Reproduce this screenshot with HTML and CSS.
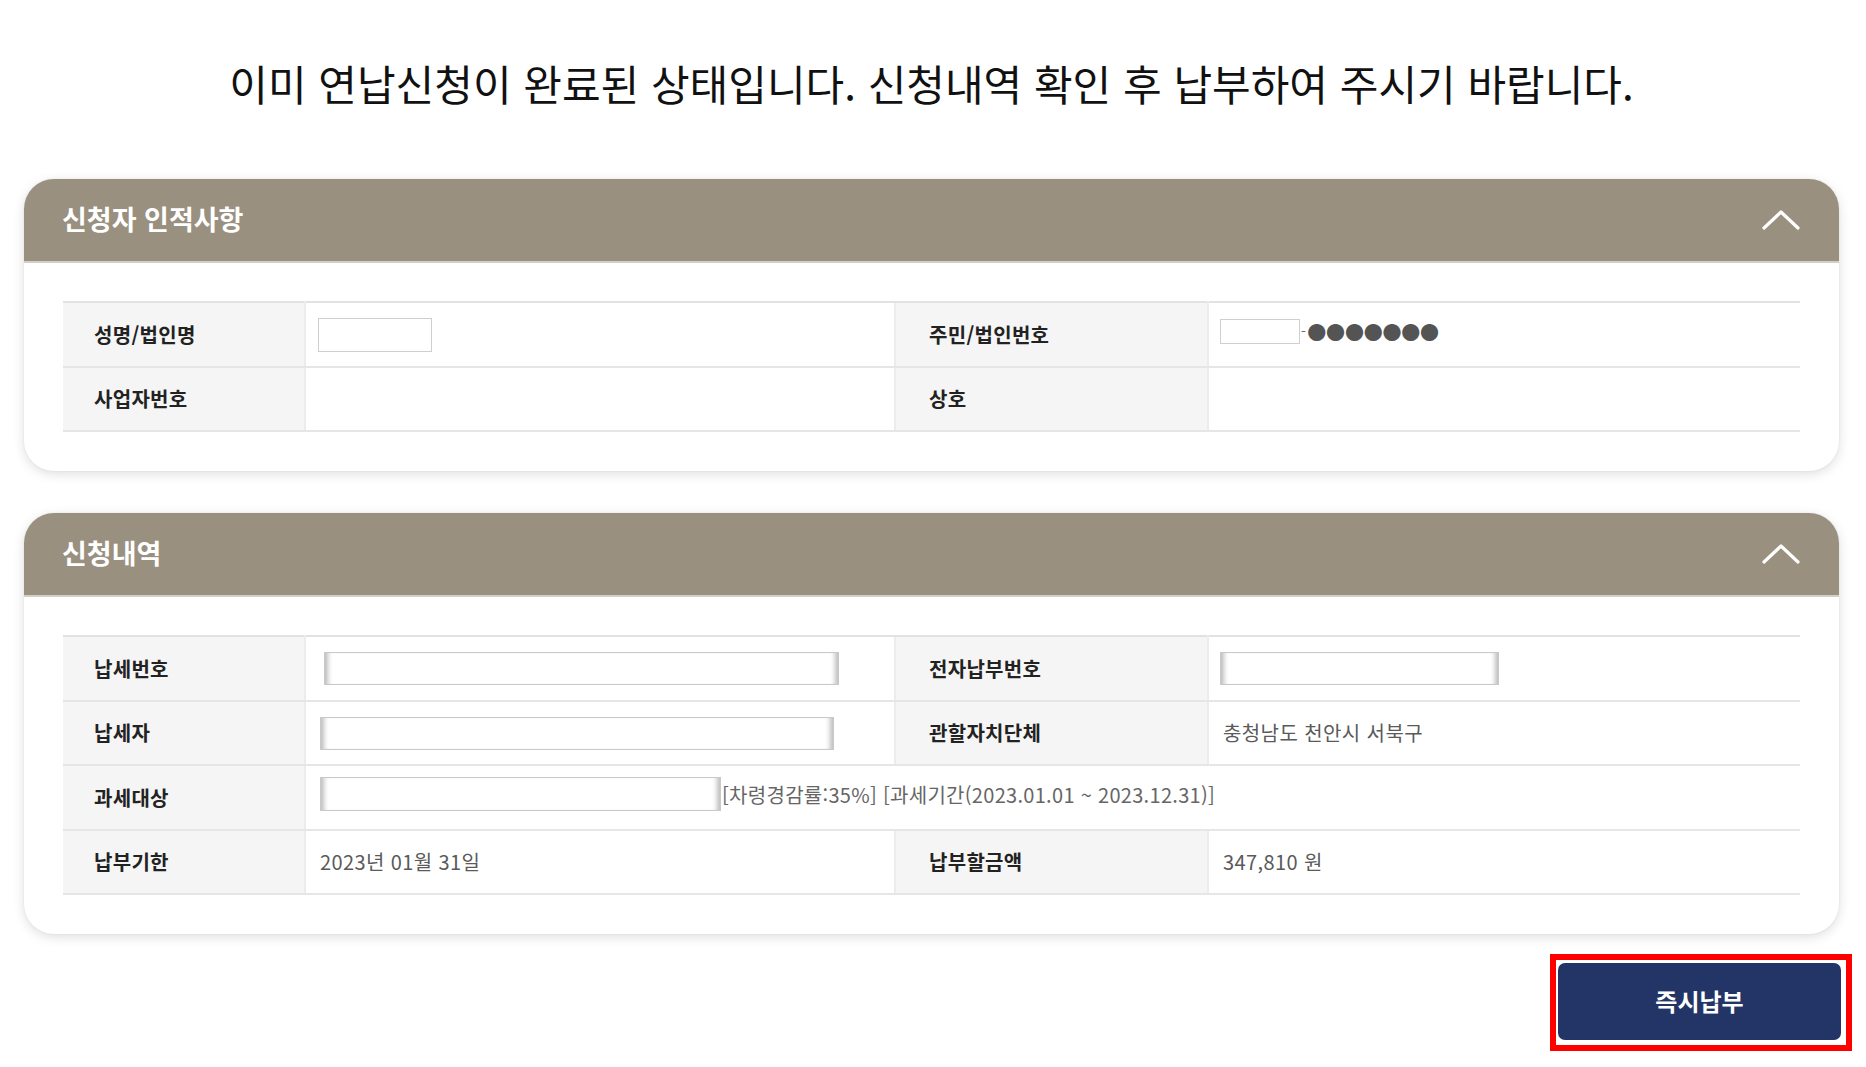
FILE: index.html
```html
<!DOCTYPE html>
<html lang="ko">
<head>
<meta charset="utf-8">
<title>연납신청 확인</title>
<link rel="stylesheet" href="styles.css">
</head>
<body>
<div class="page">
  <h1 class="notice">이미 연납신청이 완료된 상태입니다. 신청내역 확인 후 납부하여 주시기 바랍니다.</h1>

  <section class="card">
    <div class="card-head">
      <h2 class="card-title">신청자 인적사항</h2>
      <svg class="chevron" width="38" height="22" viewBox="0 0 38 22"><polyline points="2,19 19,3 36,19" fill="none" stroke="#fff" stroke-width="3.2" stroke-linecap="round" stroke-linejoin="round"/></svg>
    </div>
    <div class="card-body">
      <table class="info">
        <colgroup><col class="c1"><col class="c2"><col class="c3"><col class="c4"></colgroup>
        <tr>
          <th>성명/법인명</th>
          <td><span class="box box-name"></span></td>
          <th>주민/법인번호</th>
          <td><span class="rrn"><span class="box box-rrn"></span><span class="dash">-</span><span class="dots">●●●●●●●</span></span></td>
        </tr>
        <tr>
          <th>사업자번호</th>
          <td></td>
          <th>상호</th>
          <td></td>
        </tr>
      </table>
    </div>
  </section>

  <section class="card card-second">
    <div class="card-head">
      <h2 class="card-title">신청내역</h2>
      <svg class="chevron" width="38" height="22" viewBox="0 0 38 22"><polyline points="2,19 19,3 36,19" fill="none" stroke="#fff" stroke-width="3.2" stroke-linecap="round" stroke-linejoin="round"/></svg>
    </div>
    <div class="card-body">
      <table class="info">
        <colgroup><col class="c1"><col class="c2"><col class="c3"><col class="c4"></colgroup>
        <tr>
          <th>납세번호</th>
          <td><span class="box mask mask-taxno"></span></td>
          <th>전자납부번호</th>
          <td><span class="box mask mask-epay"></span></td>
        </tr>
        <tr>
          <th>납세자</th>
          <td><span class="box mask mask-payer"></span></td>
          <th>관할자치단체</th>
          <td>충청남도 천안시 서북구</td>
        </tr>
        <tr>
          <th>과세대상</th>
          <td colspan="3"><span class="target"><span class="box mask mask-target"></span><span class="target-text">[차령경감률:35%] [과세기간(2023.01.01 ~ 2023.12.31)]</span></span></td>
        </tr>
        <tr>
          <th>납부기한</th>
          <td>2023년 01월 31일</td>
          <th>납부할금액</th>
          <td>347,810 원</td>
        </tr>
      </table>
    </div>
  </section>

  <div class="actions">
    <div class="highlight">
      <button class="pay-btn" type="button">즉시납부</button>
    </div>
  </div>
</div>
</body>
</html>
```

FILE: styles.css
```css
* { box-sizing: border-box; }

html, body {
  margin: 0;
  padding: 0;
  background: #fff;
}

body {
  font-family: "Noto Sans CJK KR", "Noto Sans", sans-serif;
  color: #222;
}

.page {
  width: 1815px;
  margin-left: 24px;
  padding-top: 58px;
}

.notice {
  margin: 0;
  font-size: 42px;
  line-height: 50px;
  font-weight: 400;
  color: #111;
  text-align: center;
  letter-spacing: 0;
}

.card {
  margin-top: 71px;
  background: #fff;
  border-radius: 30px;
  overflow: hidden;
  box-shadow: 0 3px 12px rgba(0, 0, 0, 0.13), 0 0 2px rgba(0, 0, 0, 0.08);
}

.card-second {
  margin-top: 42px;
}

.card-head {
  height: 84px;
  background: #9a907f;
  border-bottom: 2px solid #d3cec6;
  display: flex;
  align-items: center;
  justify-content: space-between;
  padding: 0 39px 0 38px;
}

.card-title {
  margin: 0 0 3px;
  font-size: 27px;
  font-weight: 700;
  color: #fff;
  letter-spacing: 0;
}

.chevron {
  display: block;
  margin-top: 0;
}

.card-body {
  padding: 38px 39px 39px;
}

.info {
  width: 100%;
  border-collapse: collapse;
  table-layout: fixed;
}

.info .c1 { width: 242px; }
.info .c2 { width: 590px; }
.info .c3 { width: 313px; }
.info .c4 { width: auto; }

.info tr:first-child th,
.info tr:first-child td {
  border-top: 2px solid #e2e2e2;
}

.info th,
.info td {
  height: 64.5px;
  border-bottom: 2px solid #e6e6e6;
  vertical-align: middle;
  padding: 0;
}

.info th {
  background: #f5f5f5;
  text-align: left;
  padding-left: 31px;
  font-size: 20px;
  font-weight: 700;
  color: #222;
  letter-spacing: 0.3px;
  border-right: 2px solid #ececec;
}

.info th + td + th {
  padding-left: 33px;
  border-left: 2px solid #ececec;
}

.info td {
  padding-left: 14px;
  font-size: 20px;
  font-weight: 400;
  color: #5a5a5a;
  letter-spacing: 0.4px;
}

.box {
  display: inline-block;
  vertical-align: middle;
  background: #fff;
  border: 1px solid #cfcfcf;
}

.box-name {
  width: 114px;
  height: 34px;
  margin-left: -2px;
}

.rrn {
  display: inline-flex;
  align-items: center;
  margin-left: -3px;
}

.box-rrn {
  width: 80px;
  height: 25px;
}

.dash {
  color: #666;
  font-size: 14px;
  margin: 0 1px;
}

.dots {
  color: #545454;
  font-size: 19px;
  letter-spacing: -0.2px;
  line-height: 1;
}

.mask {
  height: 33px;
  border: 1px solid #c9c9c9;
  box-shadow: inset 7px 0 5px -4px #bdbdbd, inset -7px 0 5px -4px #bdbdbd;
}

.mask-taxno { width: 515px; margin-left: 4px; }
.mask-epay { width: 279px; margin-left: -3px; }
.mask-payer { width: 514px; }
.mask-target { width: 401px; height: 34px; }

.target {
  display: inline-flex;
  align-items: center;
}

.target-text {
  color: #666;
  font-size: 20px;
  letter-spacing: 0.3px;
  margin-left: 1px;
}

.actions {
  display: flex;
  justify-content: flex-end;
  margin-top: 20px;
  margin-right: -13px;
}

.highlight {
  border: 6px solid #f00;
  padding: 3px 5px 5px 2px;
}

.pay-btn {
  display: block;
  width: 283px;
  height: 77px;
  border: none;
  border-radius: 7px;
  background: #233567;
  color: #fff;
  font-family: "Noto Sans CJK KR", "Noto Sans", sans-serif;
  font-size: 24px;
  font-weight: 700;
  letter-spacing: 0;
  padding-bottom: 3px;
  cursor: pointer;
}
```
